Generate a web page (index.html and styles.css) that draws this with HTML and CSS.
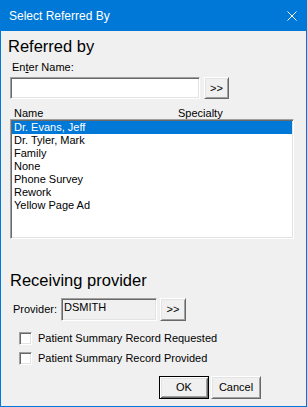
FILE: index.html
```html
<!DOCTYPE html>
<html lang="en">
<head>
  <meta charset="UTF-8" />
  <title>Select Referred By</title>
  <link rel="stylesheet" href="styles.css">
</head>
<body>
  <div class="window">
    <div class="titlebar">
      <span class="title">Select Referred By</span>
      <svg class="close" width="10" height="10" viewBox="0 0 10 10">
        <path d="M0.5 0.5 L9.5 9.5 M9.5 0.5 L0.5 9.5" stroke="#fff" stroke-width="1" fill="none" />
      </svg>
    </div>

    <div class="content">
      <div class="section-title">Referred by</div>
      <div class="field-label">En<u>t</u>er Name:</div>
      <div class="name-row">
        <div class="textbox name-input"></div>
        <button class="btn small">&gt;&gt;</button>
      </div>

      <div class="list-header">
        <span class="col-name">Name</span>
        <span class="col-spec">Specialty</span>
      </div>
      <div class="listbox">
        <div class="row selected">Dr. Evans, Jeff</div>
        <div class="row">Dr. Tyler, Mark</div>
        <div class="row">Family</div>
        <div class="row">None</div>
        <div class="row">Phone Survey</div>
        <div class="row">Rework</div>
        <div class="row">Yellow Page Ad</div>
      </div>

      <div class="section-title provider-title">Receiving provider</div>
      <div class="provider-row">
        <span class="provider-label">Provider:</span>
        <div class="textbox readonly">DSMITH</div>
        <button class="btn small tall">&gt;&gt;</button>
      </div>

      <label class="check first"><span class="box"></span>Patient Summary Record Requested</label>
      <label class="check"><span class="box"></span>Patient Summary Record Provided</label>

      <div class="actions">
        <button class="btn default">OK</button>
        <button class="btn">Cancel</button>
      </div>
    </div>
  </div>
</body>
</html>
```

FILE: styles.css
```css
body {
  margin: 0;
  font-family: "Liberation Sans", Arial, sans-serif;
  font-size: 11px;
  color: #000;
  background: #f0f0f0;
}

.window {
  width: 305px;
  height: 405px;
  border: 1px solid #0078d7;
  background: #f0f0f0;
  display: flex;
  flex-direction: column;
}

.titlebar {
  height: 30px;
  background: #0078d7;
  display: flex;
  align-items: center;
  justify-content: space-between;
  padding: 0 9px 0 8px;
  flex-shrink: 0;
}

.title {
  color: #fff;
  font-size: 12px;
  line-height: 30px;
}

.close {
  display: block;
  margin-top: -1px;
}

.content {
  flex: 1;
}

.section-title {
  font-size: 16.5px;
  line-height: 18px;
  margin: 6px 0 0 7px;
}

.provider-title {
  margin: 32px 0 0 9px;
}

.field-label {
  line-height: 13px;
  margin: 6px 0 0 11px;
}

.name-row {
  display: flex;
  gap: 4px;
  margin: 3px 0 0 9px;
}

.textbox {
  box-sizing: border-box;
  height: 22px;
  background: #fff;
  border: 1px solid;
  border-color: #a0a0a0 #fff #fff #a0a0a0;
  box-shadow: inset 1px 1px 0 #696969, inset -1px -1px 0 #e3e3e3;
}

.name-input {
  width: 190px;
}

.btn {
  box-sizing: border-box;
  font-family: inherit;
  font-size: 11px;
  line-height: 13px;
  color: #000;
  background: #f0f0f0;
  padding: 0;
  border: 1px solid;
  border-color: #fff #696969 #696969 #fff;
  box-shadow: inset 1px 1px 0 #e3e3e3, inset -1px -1px 0 #a0a0a0;
  width: 50px;
  height: 23px;
}

.btn.small {
  width: 25px;
  height: 22px;
}

.btn.small.tall {
  width: 26px;
  height: 23px;
}

.btn.default {
  border-color: #000;
  box-shadow: inset 1px 1px 0 #fff, inset -1px -1px 0 #696969, inset 2px 2px 0 #e3e3e3, inset -2px -2px 0 #a0a0a0;
}

.list-header {
  display: flex;
  line-height: 12px;
  margin: 8px 0 0 13px;
}

.col-name {
  width: 164px;
}

.listbox {
  box-sizing: border-box;
  width: 284px;
  height: 120px;
  margin-left: 9px;
  background: #fff;
  border: 1px solid;
  border-color: #a0a0a0 #fff #fff #a0a0a0;
  box-shadow: inset 1px 1px 0 #696969, inset -1px -1px 0 #e3e3e3;
  padding: 1px;
}

.row {
  height: 13px;
  line-height: 13px;
  padding-left: 2px;
  white-space: nowrap;
}

.row.selected {
  background: #0078d7;
  color: #fff;
}

.provider-row {
  display: flex;
  align-items: center;
  margin: 9px 0 0 12px;
}

.provider-label {
  width: 48px;
  line-height: 13px;
}

.textbox.readonly {
  width: 96px;
  height: 23px;
  background: #f0f0f0;
  padding: 2px 0 0 2px;
  line-height: 13px;
  margin-right: 3px;
}

.check {
  display: flex;
  align-items: center;
  line-height: 13px;
  margin: 7px 0 0 18px;
}

.check.first {
  margin-top: 11px;
}

.box {
  box-sizing: border-box;
  width: 13px;
  height: 13px;
  background: #fff;
  border: 1px solid;
  border-color: #a0a0a0 #fff #fff #a0a0a0;
  box-shadow: inset 1px 1px 0 #696969, inset -1px -1px 0 #e3e3e3;
  margin-right: 6px;
}

.actions {
  display: flex;
  gap: 2px;
  margin: 11px 0 0 158px;
}
```
